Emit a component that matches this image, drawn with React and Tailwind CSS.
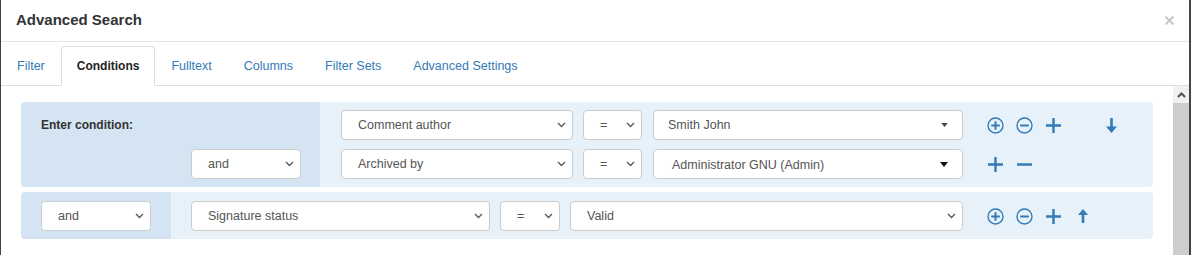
import React from "react";

const Chevron = () => (
  <svg width="9" height="6" viewBox="0 0 9 6" fill="none" stroke="#555" strokeWidth="1.3">
    <path d="M1 1l3.5 3.5L8 1" />
  </svg>
);

const Caret = ({ dark }) => (
  <svg width={dark ? 8 : 7} height={dark ? 5 : 4} viewBox="0 0 8 5" fill={dark ? "#111" : "#444"}>
    <polygon points="0,0 8,0 4,5" />
  </svg>
);

const CirclePlus = () => (
  <svg width="17" height="17" viewBox="0 0 17 17" fill="none" stroke="#337ab7">
    <circle cx="8.5" cy="8.5" r="7.5" strokeWidth="1.4" />
    <path d="M8.5 4.2v8.6M4.2 8.5h8.6" strokeWidth="2" />
  </svg>
);

const CircleMinus = () => (
  <svg width="17" height="17" viewBox="0 0 17 17" fill="none" stroke="#337ab7">
    <circle cx="8.5" cy="8.5" r="7.5" strokeWidth="1.4" />
    <path d="M4.2 8.5h8.6" strokeWidth="2" />
  </svg>
);

const Plus = () => (
  <svg width="15" height="15" viewBox="0 0 15 15" fill="none" stroke="#337ab7" strokeWidth="2.4">
    <path d="M7.5 0v15M0 7.5h15" />
  </svg>
);

const Minus = () => (
  <svg width="15" height="15" viewBox="0 0 15 15" fill="none" stroke="#337ab7" strokeWidth="2.4">
    <path d="M0 7.5h15" />
  </svg>
);

const ArrowDown = () => (
  <svg width="11" height="15" viewBox="0 0 11 15" fill="#337ab7">
    <rect x="4.2" y="0" width="2.6" height="10" />
    <polygon points="0,8.5 11,8.5 5.5,15" />
  </svg>
);

const ArrowUp = () => (
  <svg width="10" height="14" viewBox="0 0 10 14" fill="#337ab7">
    <polygon points="0,6 10,6 5,0" />
    <rect x="3.7" y="5" width="2.6" height="9" />
  </svg>
);

function Select({ value, className, caret, dark, textClass = "pl-4" }) {
  return (
    <div
      className={`h-[30px] shrink-0 bg-white border border-[#ccc] rounded-[4px] flex items-center justify-between text-[12.5px] text-[#555] ${
        caret ? "pr-[14px]" : "pr-[6px]"
      } ${className}`}
    >
      <span className={textClass}>{value}</span>
      {caret ? <Caret dark={dark} /> : <Chevron />}
    </div>
  );
}

function Icons({ items }) {
  return (
    <div className="ml-[18px] flex items-center">
      {items.map((Icon, i) => (
        <div key={i} className="w-[29px] flex justify-center">
          {Icon ? <Icon /> : null}
        </div>
      ))}
    </div>
  );
}

const tabs = ["Filter", "Conditions", "Fulltext", "Columns", "Filter Sets", "Advanced Settings"];

export default function App() {
  return (
    <div className="w-[1191px] h-[255px] overflow-hidden bg-white border-l border-r-2 border-[#3c4650] flex flex-col font-['Liberation_Sans',Arial,sans-serif]">
      {/* Header */}
      <div className="h-[42px] shrink-0 flex items-center justify-between px-[15px] border-b border-[#e5e5e5]">
        <span className="text-[15px] font-bold text-[#333]">Advanced Search</span>
        <svg width="9" height="9" viewBox="0 0 9 9" stroke="#c8c8c8" strokeWidth="2">
          <path d="M0.5 0.5l8 8M8.5 0.5l-8 8" />
        </svg>
      </div>

      {/* Tabs */}
      <ul className="flex pt-[4px] border-b border-[#ddd] shrink-0">
        {tabs.map((t) => (
          <li key={t} className="-mb-px">
            <span
              className={`block px-[15px] py-[10px] leading-[18px] border rounded-t-[4px] ${
                t === "Conditions"
                  ? "border-[#ddd] border-b-white bg-white text-[12px] font-bold text-[#222]"
                  : "border-transparent text-[12.5px] text-[#337ab7]"
              }`}
            >
              {t}
            </span>
          </li>
        ))}
      </ul>

      {/* Body */}
      <div className="flex flex-1 min-h-0">
        <div className="flex-1 pt-[16px] px-[20px] flex flex-col gap-[5px]">
          {/* Block 1 */}
          <div className="flex rounded-[4px] overflow-hidden">
            <div className="w-[299px] bg-[#d5e4f3] pl-[20px] pt-[8px] pb-[8px] flex flex-col gap-[9px]">
              <div className="h-[30px] flex items-center text-[12px] font-bold text-[#333]">Enter condition:</div>
              <Select value="and" className="w-[110px] ml-[150px]" textClass="pl-[16px]" />
            </div>
            <div className="flex-1 bg-[#e7f1fa] pl-[21px] pt-[8px] pb-[8px] flex flex-col gap-[9px]">
              <div className="flex items-center">
                <Select value="Comment author" className="w-[232px]" textClass="pl-[16px]" />
                <Select value="=" className="w-[59px] ml-[10px]" textClass="pl-[16px]" />
                <Select value="Smith John" className="w-[310px] ml-[11px]" caret textClass="pl-[14px]" />
                <Icons items={[CirclePlus, CircleMinus, Plus, null, ArrowDown]} />
              </div>
              <div className="flex items-center">
                <Select value="Archived by" className="w-[232px]" textClass="pl-[16px]" />
                <Select value="=" className="w-[59px] ml-[10px]" textClass="pl-[16px]" />
                <Select value="Administrator GNU (Admin)" className="w-[310px] ml-[11px]" caret dark textClass="pl-[18px] pt-[2px]" />
                <Icons items={[Plus, Minus]} />
              </div>
            </div>
          </div>

          {/* Block 2 */}
          <div className="flex rounded-[4px] overflow-hidden">
            <div className="w-[150px] bg-[#d5e4f3] pl-[20px] pt-[9px] pb-[8px]">
              <Select value="and" className="w-[110px]" textClass="pl-[16px]" />
            </div>
            <div className="flex-1 bg-[#e7f1fa] pl-[20px] pt-[9px] pb-[8px] flex items-center">
              <Select value="Signature status" className="w-[299px]" textClass="pl-[16px]" />
              <Select value="=" className="w-[60px] ml-[10px]" textClass="pl-[16px]" />
              <Select value="Valid" className="w-[393px] ml-[10px]" textClass="pl-[16px]" />
              <Icons items={[CirclePlus, CircleMinus, Plus, ArrowUp]} />
            </div>
          </div>
        </div>

        {/* Scrollbar */}
        <div className="w-[16px] flex flex-col">
          <div className="h-[17px] bg-[#f1f1f1] flex items-center justify-center">
            <svg width="9" height="6" viewBox="0 0 9 6" fill="none" stroke="#505050" strokeWidth="2">
              <path d="M1 5l3.5-3.5L8 5" />
            </svg>
          </div>
          <div className="flex-1 bg-[#cdcdcd]" />
        </div>
      </div>
    </div>
  );
}
